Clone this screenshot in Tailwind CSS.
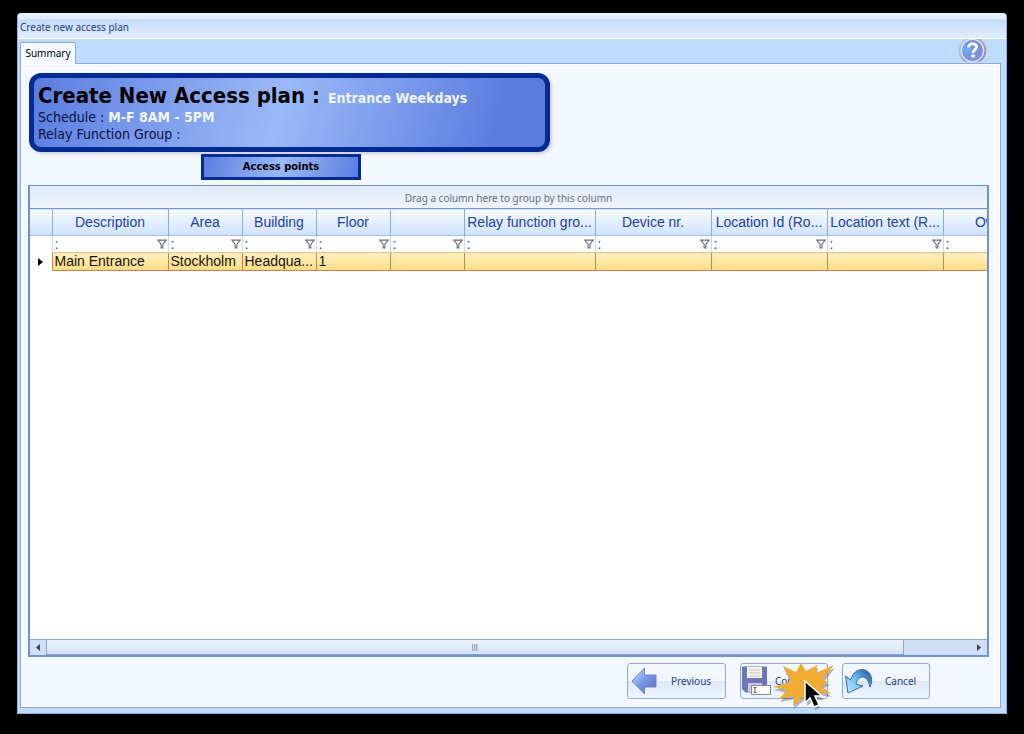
<!DOCTYPE html>
<html lang="en">
<head>
<meta charset="utf-8">
<title>Create new access plan</title>
<script src="https://cdn.jsdelivr.net/npm/@tailwindcss/browser@4"></script>
</head>
<body class="h-screen bg-black px-[17px] pt-[13px] pb-5 font-['Noto_Sans',sans-serif] text-[10px] text-[#1e3f85] overflow-hidden">
<svg class="hidden" aria-hidden="true">
  <symbol id="funnel" viewBox="0 0 9 9"><path d="M.7 1h7.6L5.3 4.6V8H3.7V4.6z" fill="#fff" stroke="#6b6b78" stroke-width="1"/></symbol>
</svg>
<main class="relative flex h-full flex-col rounded-t-[4px] bg-[#bfdbff] border-x border-b border-[#8db4e8]">
  <header class="flex h-[26px] shrink-0 items-center rounded-t-[4px] border-b border-white bg-[linear-gradient(#e6f1fe_0,#dcebfe_6px,#c6dcfd_7px,#e2edfe_100%)] pl-[2px] pt-[3px]">
    <h1>Create new access plan</h1>
  </header>
  <div class="flex h-6 shrink-0 items-end justify-between pl-[2px] pr-[19px]">
    <button class="relative z-10 -mb-px h-[22px] w-14 rounded-t-[2px] border border-b-0 border-[#8ca9d6] bg-[#f6faff] text-black">Summary</button>
    <button aria-label="Help" class="h-6 w-[29px]">
      <svg viewBox="0 0 29 24" class="h-6 w-[29px]">
        <defs>
          <radialGradient id="ball" cx=".28" cy=".42" r=".8"><stop offset="0" stop-color="#66b8ff"/><stop offset=".4" stop-color="#7196e8"/><stop offset="1" stop-color="#858bd0"/></radialGradient>
          <linearGradient id="ring" x2="1" y2="1"><stop offset="0" stop-color="#c9cfdd"/><stop offset="1" stop-color="#85888f"/></linearGradient>
        </defs>
        <circle cx="14.500" cy="11.500" r="13.800" fill="url(#ring)"/>
        <circle cx="14.500" cy="11.500" r="11.800" fill="#dfe4f2"/>
        <circle cx="14.500" cy="11.500" r="10.500" fill="url(#ball)"/>
        <path d="M10.500 8.500C10.500 3.500 18.500 3.500 18.500 8c0 3-3.500 3-3.500 6" fill="none" stroke="#6c7fc4" stroke-width="4.500"/>
        <path d="M10.500 8.500C10.500 3.500 18.500 3.500 18.500 8c0 3-3.500 3-3.500 6" fill="none" stroke="#fff" stroke-width="3"/>
        <path d="M13.300 15.500h3.400v3h-3.400z" fill="#fff"/>
        <path d="M0 22.500h29V24H0z" fill="#bfdbff"/>
      </svg>
    </button>
  </div>
  <section class="mb-[5px] ml-[2px] mr-[5px] flex min-h-0 flex-1 flex-col border border-[#8ca9d6] bg-[#f3f7fe] pl-[8px] pr-[11px] pt-[9px] shadow-[inset_0_0_0_1px_#fff]">
    <div class="h-[79px] w-[521px] shrink-0 rounded-[12px] border-[5px] border-[#032b93] bg-[linear-gradient(105deg,#5b7de0_0%,#9bb9f7_48%,#5b7de0_90%)] pl-[4px] pt-[5px] font-['DejaVu_Sans_Condensed','Noto_Sans',sans-serif] text-[14px] text-[#06123f] shadow-[2px_2px_3px_#ccd0da]">
      <div class="flex h-[26px] items-baseline gap-2 whitespace-nowrap leading-[26px]"><h2 class="text-[22px] font-bold text-black">Create New Access plan :</h2><b class="text-[14px] text-[#f0f5ff]">Entrance Weekdays</b></div>
      <p class="leading-[17px]">Schedule : <b class="text-[#f0f5ff]">M-F 8AM - 5PM</b></p>
      <p class="leading-[17px]">Relay Function Group :</p>
    </div>
    <h3 class="ml-[172px] mt-[2px] flex h-[26px] w-[160px] shrink-0 items-center justify-center border-[3px] border-[#032b93] bg-[linear-gradient(105deg,#5b7de0_0%,#9bb9f7_50%,#5b7de0_100%)] font-['DejaVu_Sans_Condensed','Noto_Sans',sans-serif] text-[11px] font-bold text-black">Access points</h3>
    <div class="-ml-px mt-[5px] flex min-h-0 flex-1 flex-col border-2 border-t border-[#6f92cc] bg-white">
      <p class="flex h-[22px] shrink-0 items-center justify-center bg-gradient-to-b from-[#e0eaf8] to-[#f0f5fd] pt-[2px] text-[#66707e]">Drag a column here to group by this column</p>
      <div class="min-h-0 flex-1 overflow-hidden">
        <table class="w-[1018px] table-fixed border-collapse font-['Liberation_Sans',Arial,sans-serif] text-[14px]">
          <colgroup><col class="w-[22px]"><col class="w-[116px]"><col class="w-[74px]"><col class="w-[74px]"><col class="w-[74px]"><col class="w-[74px]"><col class="w-[131px]"><col class="w-[116px]"><col class="w-[116px]"><col class="w-[116px]"><col class="w-[105px]"></colgroup>
          <thead class="text-[#2340a8]">
            <tr class="h-[27px] whitespace-nowrap border-y border-t-[#6f92cc] border-b-[#a5bfe0] bg-gradient-to-b from-[#f8fbff] to-[#cfe3fd] *:border-r *:border-[#8cacd8] *:p-0 *:font-normal">
              <th></th><th>Description</th><th>Area</th><th>Building</th><th>Floor</th><th></th><th>Relay function gro...</th><th>Device nr.</th><th>Location Id (Ro...</th><th>Location text (R...</th><th>Owner</th>
            </tr>
            <tr class="h-[17px] *:border-r *:border-[#cdd9ec] *:p-0 *:font-normal">
              <td></td>
              <td><label class="flex items-center pr-px"><input aria-label="Filter Description" value=":" class="h-4 w-0 min-w-0 flex-1 pl-[2px] outline-none"><svg class="size-[10px]"><use href="#funnel"/></svg></label></td>
              <td><label class="flex items-center pr-px"><input aria-label="Filter Area" value=":" class="h-4 w-0 min-w-0 flex-1 pl-[2px] outline-none"><svg class="size-[10px]"><use href="#funnel"/></svg></label></td>
              <td><label class="flex items-center pr-px"><input aria-label="Filter Building" value=":" class="h-4 w-0 min-w-0 flex-1 pl-[2px] outline-none"><svg class="size-[10px]"><use href="#funnel"/></svg></label></td>
              <td><label class="flex items-center pr-px"><input aria-label="Filter Floor" value=":" class="h-4 w-0 min-w-0 flex-1 pl-[2px] outline-none"><svg class="size-[10px]"><use href="#funnel"/></svg></label></td>
              <td><label class="flex items-center pr-px"><input aria-label="Filter" value=":" class="h-4 w-0 min-w-0 flex-1 pl-[2px] outline-none"><svg class="size-[10px]"><use href="#funnel"/></svg></label></td>
              <td><label class="flex items-center pr-px"><input aria-label="Filter Relay function group" value=":" class="h-4 w-0 min-w-0 flex-1 pl-[2px] outline-none"><svg class="size-[10px]"><use href="#funnel"/></svg></label></td>
              <td><label class="flex items-center pr-px"><input aria-label="Filter Device nr." value=":" class="h-4 w-0 min-w-0 flex-1 pl-[2px] outline-none"><svg class="size-[10px]"><use href="#funnel"/></svg></label></td>
              <td><label class="flex items-center pr-px"><input aria-label="Filter Location Id" value=":" class="h-4 w-0 min-w-0 flex-1 pl-[2px] outline-none"><svg class="size-[10px]"><use href="#funnel"/></svg></label></td>
              <td><label class="flex items-center pr-px"><input aria-label="Filter Location text" value=":" class="h-4 w-0 min-w-0 flex-1 pl-[2px] outline-none"><svg class="size-[10px]"><use href="#funnel"/></svg></label></td>
              <td><label class="flex items-center pr-px"><input aria-label="Filter Owner" value=":" class="h-4 w-0 min-w-0 flex-1 pl-[2px] outline-none"><svg class="size-[10px]"><use href="#funnel"/></svg></label></td>
            </tr>
          </thead>
          <tbody class="text-[#181408]">
            <tr class="h-[18px] whitespace-nowrap leading-[17px] *:border *:border-t-[#e0cc90] *:border-[#d08048] *:bg-gradient-to-b *:from-[#fff0c0] *:to-[#ffdc84] *:py-0 *:pl-[2px] *:pr-0 *:text-left *:font-normal">
              <td class="border-y-0! border-l-0! bg-none!"><svg viewBox="0 0 5 8" class="ml-[6px] h-2 w-[5px]"><path d="M0 0l5 4-5 4z" fill="#000"/></svg></td>
              <td>Main Entrance</td><td>Stockholm</td><td>Headqua...</td><td>1</td><td></td><td></td><td></td><td></td><td></td><td></td>
            </tr>
          </tbody>
        </table>
      </div>
      <div class="flex h-4 shrink-0 border-t border-[#8ca5cd] bg-[#cfdff5]">
        <button aria-label="Scroll left" class="flex w-4 items-center justify-center"><svg viewBox="0 0 4 7" class="h-[7px] w-1"><path d="M4 0v7L0 3.500z" fill="#34466e"/></svg></button>
        <div class="flex flex-1 items-center justify-center border border-t-0 border-[#8ca5cd] bg-gradient-to-b from-[#edf3fc] to-[#d5e2f5]"><span class="h-[7px] w-[6px] bg-[repeating-linear-gradient(90deg,#a3b1cf_0_1px,#c0cde4_1px_2px)]"></span></div>
        <button aria-label="Scroll right" class="flex w-[83px] items-center justify-end pr-[6px]"><svg viewBox="0 0 4 7" class="h-[7px] w-1"><path d="M0 0v7L4 3.500z" fill="#34466e"/></svg></button>
      </div>
    </div>
    <footer class="flex h-[50px] shrink-0 items-start justify-end pr-[59px] pt-[6px] *:h-9 *:rounded-[3px] *:border *:border-[#91a9d4] *:bg-[linear-gradient(#f2f6fd_0_50%,#dde8f8_50%,#eff5ff_100%)]">
      <button class="mr-[14px] flex w-[99px] items-center gap-[14px] pl-[3px]">
        <svg viewBox="0 0 26 28" class="h-7 w-[26px]"><defs><linearGradient id="arr" x1="0" y1="0" x2="1" y2="1"><stop stop-color="#d6e7ff"/><stop offset=".45" stop-color="#789de8"/><stop offset="1" stop-color="#5f5fbc"/></linearGradient></defs><path d="M1 14L13.500 1v7H25v12H13.500v7z" fill="url(#arr)" stroke="#7a7fc4"/></svg>Previous</button>
      <button class="relative mr-[14px] flex w-[88px] items-center gap-[4px] pl-px">
        <svg viewBox="0 0 29 30" class="h-[30px] w-[29px]"><path d="M.500 1h24v25h-21l-3-3z" fill="#7075bb" stroke="#7075b4"/><path d="M5 1h15v11H5z" fill="#f4f4ec"/><path d="M7 4h11M7 7h11M7 10h11" stroke="#c0c3c8"/><path d="M6 17h14v9H6z" fill="#c5cae2"/><path d="M9 19h4v6H9z" fill="#5a5f9c"/><path d="M9.500 19.500h19v9h-19z" fill="#fffffa" stroke="#888b8c"/><path d="M11.500 21.500h3m-1.500 0v5m-1.500 0h3" fill="none" stroke="#666"/></svg><span>Confirm</span>
        <svg viewBox="-3 0 65 50" class="pointer-events-none absolute -top-[2px] left-[31px] h-[50px] w-[65px]">
          <path d="M8 4L21 10 26 1 31 9 42 3 41 11 59 3 47 18 54 20 46 24 56 32 43 30 37 38 31 33 18 44 19 34 4 37 12 28-2 25 16 20z" transform="translate(1 3)" fill="#303850" opacity=".35"/>
          <path d="M8 4L21 10 26 1 31 9 42 3 41 11 59 3 47 18 54 20 46 24 56 32 43 30 37 38 31 33 18 44 19 34 4 37 12 28-2 25 16 20z" fill="#f1ab32"/>
          <path d="M31 20v22l5-4 3 8 5-2-3-8h7z" transform="translate(1 2)" fill="#303030" opacity=".35"/>
          <path d="M30 19v22l5-5 4 9 5-2-4-9h7z" fill="#080808" stroke="#fff" stroke-width="1.500"/>
        </svg>
      </button>
      <button class="flex w-[88px] items-center gap-[11px] pl-px">
        <svg viewBox="0 0 30 28" class="h-7 w-[30px]"><defs><linearGradient id="undo" x1="0" y1="1" x2="1" y2="0"><stop stop-color="#c8efff"/><stop offset=".5" stop-color="#6cc0f2"/><stop offset="1" stop-color="#164b9b"/></linearGradient></defs><path d="M1.500 9l5 4C9 5 15 1 21 3c7 3 8 10 5 17-1-6-4-10-8-10-3 0-5 3-6 7l7 2L4 26z" fill="url(#undo)" stroke="#3a6aae" stroke-linejoin="round"/></svg>Cancel</button>
    </footer>
  </section>
</main>
</body>
</html>
